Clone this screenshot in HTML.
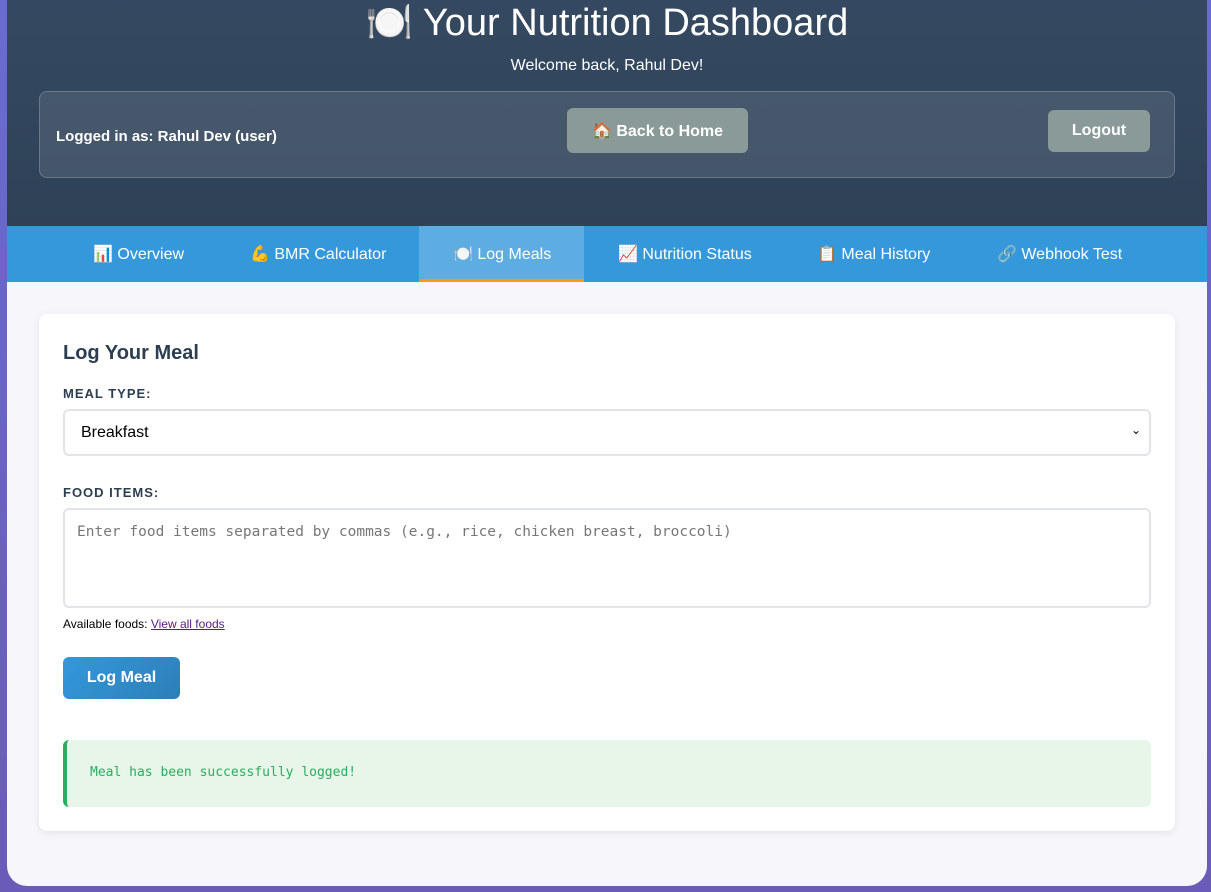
<!DOCTYPE html>
<html><head><meta charset="utf-8"><style>
*{box-sizing:border-box;margin:0;padding:0}
body{width:1211px;height:892px;overflow:hidden;background:linear-gradient(180deg,#6a6bd0,#6b5bb8);font-family:"Liberation Sans","Noto Sans CJK SC",sans-serif}
.wrap{position:absolute;left:7px;top:-20px;width:1200px;height:906px;background:#f6f6fb;border-radius:20px;overflow:hidden}
.hdr{position:absolute;left:0;top:0;width:1200px;height:246px;background:linear-gradient(180deg,#354a62,#2e4157);color:#fff}
h1{position:absolute;top:21px;width:100%;text-align:center;font-weight:normal;font-size:38px;font-family:"Liberation Sans",sans-serif}
.wel{position:absolute;top:77px;width:100%;text-align:center;font-size:16px}
.bar{position:absolute;left:32px;top:111px;width:1136px;height:87px;border:1px solid rgba(255,255,255,.2);border-radius:8px;background:rgba(255,255,255,.1)}
.bar .l{position:absolute;left:16px;top:36px;font-size:15px;font-weight:bold}
.btn{position:absolute;background:#8a9a98;border-radius:6px;color:#fff;font-weight:bold;font-size:16px;text-align:center}
.nav{position:absolute;top:246px;left:0;width:1200px;height:56px;background:#3498db;color:#fff;font-size:16px}
.nav span{position:absolute;top:18px}
.act{position:absolute;left:412px;top:0;width:165px;height:56px;background:#5dade2;border-bottom:3px solid #f39c12}
.card{position:absolute;left:32px;top:334px;width:1136px;height:517px;background:#fff;border-radius:8px;box-shadow:0 2px 8px rgba(0,0,0,.08)}
.card h2{position:absolute;left:24px;top:28px;font-size:20px;color:#2c3e50}
.lbl{position:absolute;left:24px;font-size:13px;color:#2c3e50;letter-spacing:1px;font-weight:bold}
.sel{position:absolute;left:24px;top:95px;width:1088px;height:47px;border:2px solid #e1e5ea;border-radius:6px;font-size:16px;padding:13px 16px}
.ta{position:absolute;left:24px;top:194px;width:1088px;height:100px;border:2px solid #e1e5ea;border-radius:6px;font-family:"DejaVu Sans Mono",monospace;font-size:14.5px;color:#777;padding:14px 12px}
.lm{position:absolute;left:24px;top:343px;width:117px;height:42px;border-radius:6px;background:linear-gradient(135deg,#3498db,#2c7fb8);color:#fff;font-weight:bold;font-size:16px;text-align:center;line-height:42px}
.ok{position:absolute;left:24px;top:426px;width:1088px;height:67px;background:#e8f5e9;border-left:4px solid #27ae60;border-radius:6px;color:#27ae60;font-family:"DejaVu Sans Mono",monospace;font-size:13px;padding:25px 23px}
</style></head><body>
<div class="wrap">
<div class="hdr">
<h1>🍽️ Your Nutrition Dashboard</h1>
<div class="wel">Welcome back, Rahul Dev!</div>
<div class="bar"><div class="l">Logged in as: Rahul Dev (user)</div>
<div class="btn" style="left:527px;top:16px;width:181px;height:45px;line-height:47px">🏠 Back to Home</div>
<div class="btn" style="left:1008px;top:18px;width:102px;height:42px;line-height:42px">Logout</div>
</div></div>
<div class="nav"><div class="act"></div>
<span style="left:86px">📊 Overview</span>
<span style="left:243px">💪 BMR Calculator</span>
<span style="left:446px">🍽️ Log Meals</span>
<span style="left:611px">📈 Nutrition Status</span>
<span style="left:810px">📋 Meal History</span>
<span style="left:990px">🔗 Webhook Test</span>
</div>
<div class="card">
<h2>Log Your Meal</h2>
<div class="lbl" style="top:72px">MEAL TYPE:</div>
<div class="sel">Breakfast<span style="position:absolute;right:8px;top:12px;font-size:12px">&#8964;</span></div>
<div class="lbl" style="top:171px">FOOD ITEMS:</div>
<div class="ta">Enter food items separated by commas (e.g., rice, chicken breast, broccoli)</div>
<div style="position:absolute;left:24px;top:303px;font-size:12px">Available foods: <span style="color:#551a8b;text-decoration:underline">View all foods</span></div>
<div class="lm">Log Meal</div>
<div class="ok">Meal has been successfully logged!</div>
</div>
</div>
</body></html>
